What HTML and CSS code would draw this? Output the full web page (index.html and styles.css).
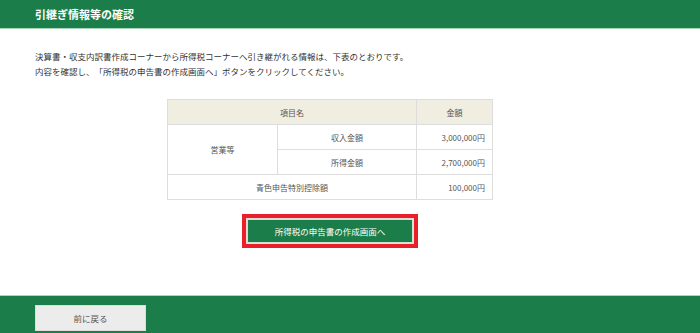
FILE: index.html
```html
<!DOCTYPE html>
<html lang="ja">
  <head>
    <meta charset="utf-8" />
    <title>引継ぎ情報等の確認</title>
    <link rel="stylesheet" href="styles.css">
  </head>
  <body>
    <div class="page-head">
      <h1>引継ぎ情報等の確認</h1>
    </div>
    <div class="content">
      <p class="lead">
        決算書・収支内訳書作成コーナーから所得税コーナーへ引き継がれる情報は、下表のとおりです。<br />
        内容を確認し、「所得税の申告書の作成画面へ」ボタンをクリックしてください。
      </p>
      <table class="info">
        <tr>
          <th colspan="2" class="c-name">項目名</th>
          <th class="c-amount">金額</th>
        </tr>
        <tr class="split">
          <td rowspan="2" class="c-cat">営業等</td>
          <td class="c-item">収入金額</td>
          <td class="num">3,000,000円</td>
        </tr>
        <tr>
          <td class="c-item">所得金額</td>
          <td class="num">2,700,000円</td>
        </tr>
        <tr>
          <td colspan="2">青色申告特別控除額</td>
          <td class="num">100,000円</td>
        </tr>
      </table>
      <div class="actions">
        <span class="highlight">
          <button class="go">所得税の申告書の作成画面へ</button>
        </span>
      </div>
    </div>
    <div class="page-foot">
      <button class="back">前に戻る</button>
    </div>
  </body>
</html>
```

FILE: styles.css
```css
body {
  margin: 0;
  font-family: "Noto Sans CJK JP", "Noto Sans", sans-serif;
  color: #333;
  background: #fff;
  text-spacing-trim: space-all;
}
.page-head {
  background-color: #1b7e4a;
  height: 28px;
  border-bottom: 1px solid #a9d6bb;
  display: flex;
  align-items: center;
  padding-left: 35px;
}
.page-head h1 {
  margin: 0;
  font-size: 11px;
  font-weight: bold;
  color: #fff;
}
.content {
  padding: 20px 35px 0;
  height: 246px;
}
.lead {
  margin: 0;
  font-size: 8.5px;
  line-height: 15px;
}
.info {
  border-collapse: collapse;
  margin: 20px 0 0 132px;
  width: 326px;
  font-size: 8px;
  color: #555;
}
.info th,
.info td {
  border: 1px solid #ddd;
  text-align: center;
  font-weight: normal;
  height: 24px;
  padding: 0 7px;
}
.info th {
  background-color: #f0ede1;
}
.c-name {
  width: 202px;
}
.c-cat {
  width: 95px;
}
.split td.c-item,
.split td.num {
  border-bottom: 1px dotted #ccc;
}
.info td.num {
  text-align: right;
}
.actions {
  text-align: center;
  margin-top: 14px;
  padding-right: 40px;
}
.highlight {
  display: inline-block;
  border: 4px solid #e8202a;
  padding: 1px;
  background: #f2d8d8;
}
.go {
  display: block;
  width: 166px;
  height: 24px;
  background-color: #1b7e4a;
  border: 1px solid #cfe3d5;
  color: #fff;
  font-family: inherit;
  font-size: 8.5px;
  cursor: pointer;
}
.page-foot {
  background-color: #1b7e4a;
  height: 38px;
  border-top: 1px solid #a9d6bb;
  padding: 7px 35px 0;
  box-sizing: border-box;
}
.back {
  width: 111px;
  height: 26px;
  background-color: #ececec;
  border: 1px solid #ddd;
  color: #555;
  font-family: inherit;
  font-size: 8.5px;
}
```
